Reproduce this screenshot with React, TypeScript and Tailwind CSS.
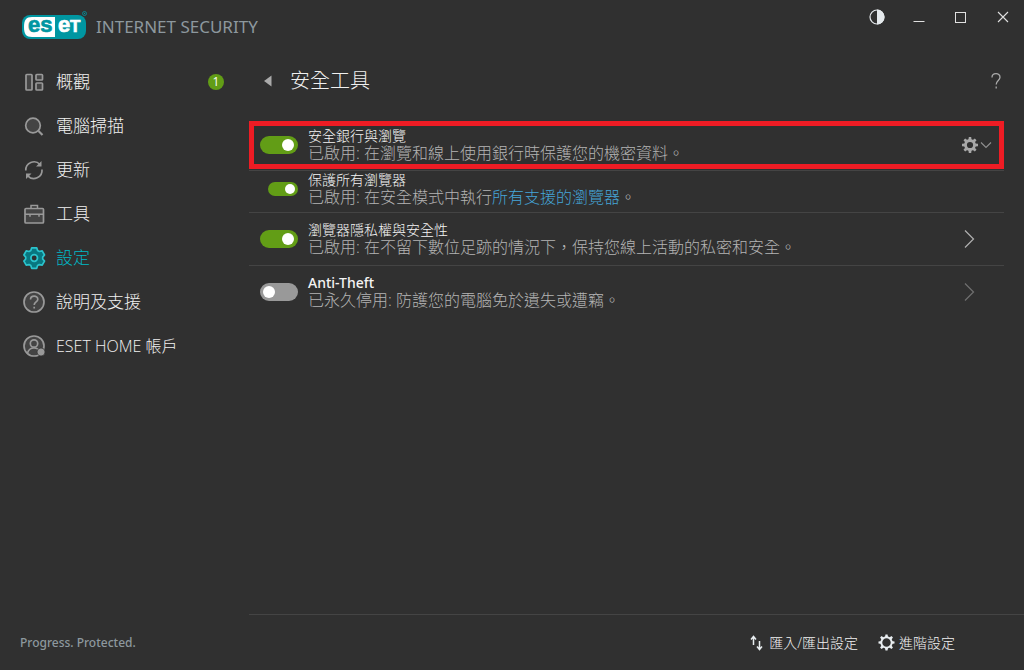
import { useState, type ReactNode } from "react";

const stroke = { fill: "none", stroke: "currentColor", strokeWidth: 1.7 } as const;

function Logo() {
  return (
    <svg width="66" height="30" viewBox="0 0 66 30" className="shrink-0" role="img" aria-label="ESET">
      <rect x="0" y="5" width="64" height="24" rx="8" fill="#0096a1" />
      <path d="M10 7H33V27H10C4 27 2 24 2 17S4 7 10 7Z" fill="#fff" />
      <g fontFamily="Liberation Sans, Arial, sans-serif" fontWeight="700" strokeWidth="0.7">
        <text x="6" y="22" fontSize="22" fill="#0096a1" stroke="#0096a1">es</text>
        <text x="36" y="22" fontSize="22" fill="#fff" stroke="#fff">e</text>
        <text x="48" y="22" fontSize="17" fill="#fff" stroke="#fff">T</text>
      </g>
      <circle cx="62.5" cy="3.5" r="2" fill="none" stroke="#0096a1" strokeWidth="0.8" />
      <circle cx="62.5" cy="3.5" r="0.7" fill="#0096a1" />
    </svg>
  );
}

function NavIcon({ children }: { children: ReactNode }) {
  return (
    <svg width="24" height="24" viewBox="0 0 24 24" className="shrink-0" aria-hidden="true" {...stroke}>
      {children}
    </svg>
  );
}

const nav: { label: string; icon: ReactNode; badge?: number; active?: boolean; latin?: boolean }[] = [
  {
    label: "概觀",
    badge: 1,
    icon: (
      <>
        <rect x="4" y="4.5" width="6" height="15.5" rx="0.8" fill="#444" />
        <rect x="14" y="4.5" width="6.5" height="5.5" rx="0.8" fill="#444" />
        <rect x="14" y="13" width="6.5" height="7" rx="0.8" fill="#444" />
      </>
    ),
  },
  {
    label: "電腦掃描",
    icon: (
      <>
        <circle cx="11" cy="11.5" r="7.3" fill="#444" />
        <path d="M16.5 17L20.5 21" strokeWidth="2.2" />
      </>
    ),
  },
  {
    label: "更新",
    icon: (
      <>
        <path d="M3.8 12.5A8.2 8.2 0 0 1 18 6.5M20 11.5A8.2 8.2 0 0 1 5.8 17.8" />
        <path d="M19.5 3V8.5H14ZM4 21V15.5H9.5Z" fill="currentColor" stroke="none" />
      </>
    ),
  },
  {
    label: "工具",
    icon: (
      <>
        <rect x="3" y="6.5" width="18.5" height="14.5" rx="1" fill="#444" />
        <path d="M9 6.5V3.5H15.5V6.5M3 12.2H21.5M8 12.5V14.8M17 12.5V14.8" strokeWidth="1.5" />
      </>
    ),
  },
  {
    label: "設定",
    active: true,
    icon: (
      <>
        <path
          d="M9.7 1.8H14.7L15.6 4.5L17.3 5.5L20.2 4.9L22.5 9L20.7 11.1V13L22.5 15.1L20.2 19.2L17.3 18.6L15.6 19.6L14.7 22.3H9.7L8.8 19.6L7.1 18.6L4.2 19.2L1.9 15.1L3.7 13V11.1L1.9 9L4.2 4.9L7.1 5.5L8.8 4.5Z"
          fill="#087780"
          stroke="#2bc4cd"
          strokeLinejoin="round"
        />
        <circle cx="12.2" cy="12" r="3.3" fill="#303030" stroke="#2bc4cd" />
      </>
    ),
  },
  {
    label: "說明及支援",
    icon: (
      <>
        <circle cx="12" cy="12" r="10" fill="#444" />
        <path d="M8.5 9.5C8.5 4.8 15.8 5 15.8 9.3C15.8 12 12.2 11.8 12.2 15M12.2 16.7V18.6" />
      </>
    ),
  },
  {
    label: "ESET HOME 帳戶",
    latin: true,
    icon: (
      <>
        <circle cx="12" cy="12" r="10" fill="#444" />
        <circle cx="12" cy="9.5" r="3.7" />
        <path d="M5.5 19C6.5 15.5 8.5 14 12 14S17 15.5 18 18" />
        <circle cx="19" cy="18" r="4" fill="currentColor" stroke="#303030" strokeWidth="0.7" />
      </>
    ),
  },
];

const toggleBase =
  "relative shrink-0 cursor-pointer appearance-none rounded-full bg-[#999] before:absolute before:rounded-full before:bg-white checked:bg-[#629d16]";
const toggleLarge = "h-[18px] w-[38px] before:left-[3px] before:top-[3px] before:size-3 checked:before:left-[22px]";
const toggleSmall = "ml-2 h-[14px] w-[30px] before:left-[2px] before:top-[2px] before:size-[10px] checked:before:left-[17px]";

function Setting(props: {
  id: string;
  title: string;
  detail: ReactNode;
  on?: boolean;
  small?: boolean;
  className: string;
  latin?: boolean;
  children?: ReactNode;
}) {
  const [on, setOn] = useState(!!props.on);
  return (
    <li className={`flex items-center ${props.className}`}>
      <input
        id={props.id}
        type="checkbox"
        role="switch"
        checked={on}
        onChange={(e) => setOn(e.target.checked)}
        className={`${toggleBase} ${props.small ? toggleSmall : toggleLarge}`}
      />
      <div className="ml-[10px] min-w-0 flex-1">
        <label
          htmlFor={props.id}
          className={`block text-sm leading-4 text-[#f4f4f4] ${props.latin ? "font-['Noto_Sans','Open_Sans',sans-serif] font-medium" : "font-light"}`}
        >
          {props.title}
        </label>
        <p className="text-base leading-[18px] text-[#b4b4b4]">{props.detail}</p>
      </div>
      {props.children}
    </li>
  );
}

function OpenButton({ label, dim }: { label: string; dim?: boolean }) {
  return (
    <button aria-label={label} className={`mr-7 ${dim ? "text-[#707070]" : "text-[#b0b0b0]"}`}>
      <svg width="14" height="20" viewBox="0 0 14 20" {...stroke} strokeWidth="1.2">
        <path d="M3 1.5L11.5 10L3 18.5" />
      </svg>
    </button>
  );
}

function Gear({ color }: { color: string }) {
  return (
    <svg width="18" height="18" viewBox="0 0 18 18" aria-hidden="true">
      <circle cx="9" cy="9" r="4.5" fill="none" stroke={color} strokeWidth="2.8" />
      {[0, 45, 90, 135, 180, 225, 270, 315].map((a) => (
        <path key={a} d="M7.4 4L7.8 1H10.2L10.6 4Z" fill={color} transform={`rotate(${a} 9 9)`} />
      ))}
    </svg>
  );
}

const windowButton = "flex h-[34px] w-[42px] items-center justify-center";

export default function App() {
  return (
    <div className="flex min-h-screen bg-[#303030] font-['Open_Sans','Noto_Sans_CJK_TC',sans-serif] font-light text-[#f0f0f0]">
      <aside className="flex w-[249px] shrink-0 flex-col">
        <div className="flex h-[60px] items-start pl-[22px] pt-[10px]">
          <Logo />
          <span className="ml-2 mt-[5px] whitespace-nowrap font-['Noto_Sans','Open_Sans',sans-serif] text-[17px] leading-6 font-normal text-[#8d989e]">
            INTERNET SECURITY
          </span>
        </div>
        <nav>
          {nav.map((n) => (
            <a
              key={n.label}
              href="#"
              aria-current={n.active ? "page" : undefined}
              className={`flex h-11 items-center pl-[22px] pr-[25px] ${n.latin ? "text-base" : "text-[17px]"} ${n.active ? "text-[#00b9c6]" : ""}`}
            >
              <span className="text-[#999]">
                <NavIcon>{n.icon}</NavIcon>
              </span>
              <span className="ml-[10px] flex-1">{n.label}</span>
              {n.badge && (
                <span className="flex size-4 items-center justify-center rounded-full bg-[#629d16] text-xs font-normal text-white">
                  {n.badge}
                </span>
              )}
            </a>
          ))}
        </nav>
        <p className="mt-auto pb-[17px] pl-5 font-['Noto_Sans','Open_Sans',sans-serif] text-xs leading-5 font-medium text-[#8d989e]">
          Progress. Protected.
        </p>
      </aside>

      <main className="flex min-w-0 flex-1 flex-col">
        <div className="flex justify-end text-[#e0e0e0]">
          <button aria-label="佈景主題" className={windowButton}>
            <svg width="16" height="16" viewBox="0 0 16 16">
              <circle cx="8" cy="8" r="7" fill="none" stroke="#e4e9ec" strokeWidth="1.2" />
              <path d="M8 .5A7.5 7.5 0 0 1 8 15.5Z" fill="#e4e9ec" />
            </svg>
          </button>
          <button aria-label="最小化" className={windowButton}>
            <svg width="12" height="12" viewBox="0 0 12 12" {...stroke} strokeWidth="1">
              <path d="M.5 10.5H11.5" />
            </svg>
          </button>
          <button aria-label="最大化" className={windowButton}>
            <svg width="12" height="12" viewBox="0 0 12 12" {...stroke} strokeWidth="1">
              <rect x=".5" y="1.5" width="10" height="10" />
            </svg>
          </button>
          <button aria-label="關閉" className={windowButton}>
            <svg width="12" height="12" viewBox="0 0 12 12" {...stroke} strokeWidth="1.1">
              <path d="M1 1L11 11M11 1L1 11" />
            </svg>
          </button>
        </div>

        <header className="mt-[26px] flex h-[42px] items-center pl-[14px] pr-[21px]">
          <button aria-label="返回" className="mr-[17px]">
            <svg width="10" height="12" viewBox="0 0 10 12">
              <path d="M8.5 .5V11.5L1 6Z" fill="#aaa" />
            </svg>
          </button>
          <h1 className="flex-1 text-xl">安全工具</h1>
          <button aria-label="說明" className="text-[#aaa]">
            <svg width="14" height="18" viewBox="0 0 14 18" {...stroke} strokeWidth="1.3">
              <path d="M3 5.5C3 .5 11 .5 11 5.2C11 8.5 7.2 8.5 7.2 12.5M7.2 14.5V16.5" />
            </svg>
          </button>
        </header>

        <ul className="mr-5 mt-[19px]">
          <Setting
            id="banking"
            on
            title="安全銀行與瀏覽"
            detail="已啟用: 在瀏覽和線上使用銀行時保護您的機密資料。"
            className="h-12 border-5 border-[#ee1c24] pb-px pl-[6px]"
          >
            <button aria-label="安全銀行與瀏覽選項" className="mr-[7px] flex items-center gap-px">
              <Gear color="#a8a8a8" />
              <svg width="12" height="8" viewBox="0 0 12 8" fill="none" stroke="#909090" strokeWidth="1.1">
                <path d="M1 1.5L6 6.5L11 1.5" />
              </svg>
            </button>
          </Setting>
          <Setting
            id="browsers"
            on
            small
            title="保護所有瀏覽器"
            detail={
              <>
                已啟用: 在安全模式中執行
                <a href="#" className="text-[#45a5d8]">所有支援的瀏覽器</a>。
              </>
            }
            className="mt-px h-[43px] border-y border-[#444] pb-[5px] pl-[11px]"
          />
          <Setting
            id="privacy"
            on
            title="瀏覽器隱私權與安全性"
            detail="已啟用: 在不留下數位足跡的情況下，保持您線上活動的私密和安全。"
            className="h-[53px] border-b border-[#444] pl-[11px]"
          >
            <OpenButton label="開啟瀏覽器隱私權與安全性" />
          </Setting>
          <Setting
            id="antitheft"
            latin
            title="Anti-Theft"
            detail="已永久停用: 防護您的電腦免於遺失或遭竊。"
            className="h-[53px] pb-px pl-[11px]"
          >
            <OpenButton label="開啟 Anti-Theft" dim />
          </Setting>
        </ul>

        <footer className="mt-auto flex h-14 items-center justify-end gap-5 border-t border-[#444] pr-[69px] text-sm">
          <button className="flex items-center gap-[5px]">
            <svg width="14" height="16" viewBox="0 0 14 16" fill="none" stroke="#e8edf0" strokeWidth="1.5">
              <path d="M3.5 10V2M1 4.5L3.5 1.5L6 4.5M9.5 6V14M7 11.5L9.5 14.5L12 11.5" />
            </svg>
            匯入/匯出設定
          </button>
          <button className="flex items-center gap-1">
            <svg width="17" height="17" viewBox="0 0 18 18" aria-hidden="true">
              <circle cx="9" cy="9" r="5.5" fill="none" stroke="#e8edf0" strokeWidth="2" />
              {[0, 45, 90, 135, 180, 225, 270, 315].map((a) => (
                <path key={a} d="M7.3 4L7.9 .5H10.1L10.7 4Z" fill="#e8edf0" transform={`rotate(${a} 9 9)`} />
              ))}
            </svg>
            進階設定
          </button>
        </footer>
      </main>
    </div>
  );
}
